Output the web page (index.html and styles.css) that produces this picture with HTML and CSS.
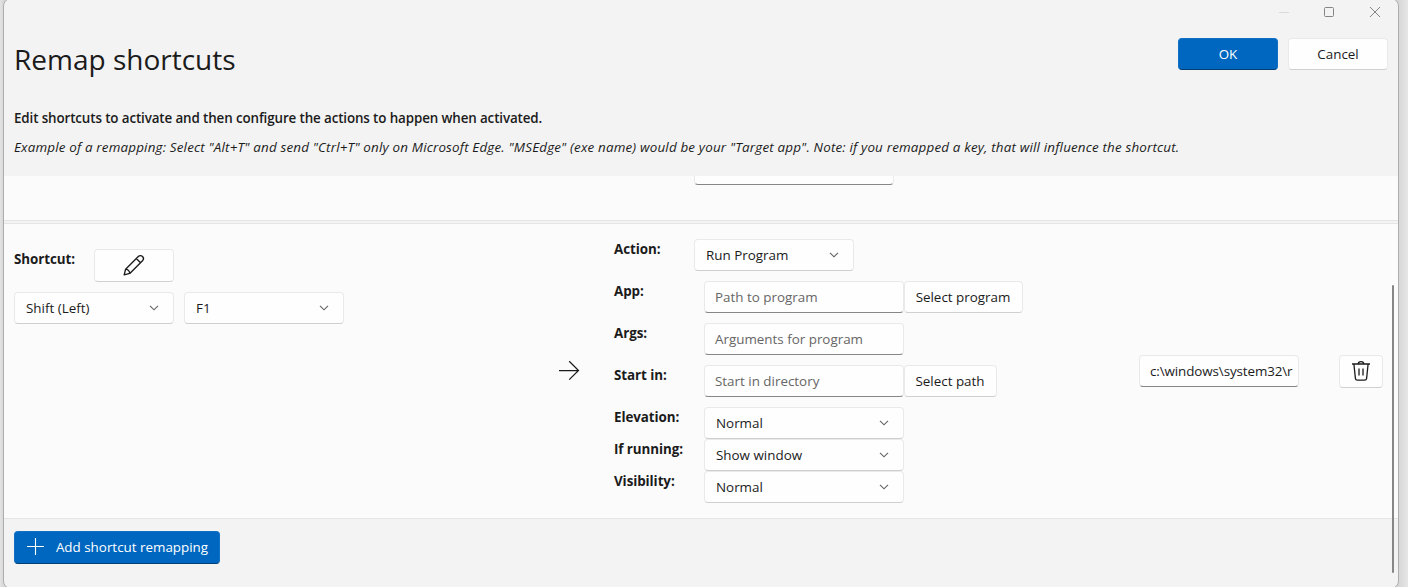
FILE: index.html
```html
<!DOCTYPE html>
<html lang="en">
<head>
<meta charset="utf-8">
<title>Remap shortcuts</title>
<link rel="stylesheet" href="styles.css">
</head>
<body>
<svg class="defs" width="0" height="0">
  <symbol id="chevron" viewBox="0 0 10 6"><path d="M1 .8 5 4.8 9 .8" fill="none" stroke="currentColor" stroke-width="1.15"/></symbol>
</svg>
<div class="window">
  <header class="header">
    <div class="caption">
      <svg class="cap-min" width="10" height="10" viewBox="0 0 10 10"><path d="M1 5.5H11" stroke="#dadada"/></svg>
      <svg class="cap-max" width="10" height="10" viewBox="0 0 10 10"><rect x=".5" y=".5" width="9" height="9" rx="1" fill="none" stroke="#858585"/></svg>
      <svg class="cap-close" width="10" height="10" viewBox="0 0 10 10"><path d="M0 0 10 10M10 0 0 10" fill="none" stroke="#858585"/></svg>
    </div>
    <div class="title-row">
      <h1 class="title">Remap shortcuts</h1>
      <button class="btn accent wide">OK</button>
      <button class="btn wide">Cancel</button>
    </div>
    <p class="lead">Edit shortcuts to activate and then configure the actions to happen when activated.</p>
    <p class="example">Example of a remapping: Select "Alt+T" and send "Ctrl+T" only on Microsoft Edge. "MSEdge" (exe name) would be your "Target app". Note: if you remapped a key, that will influence the shortcut.</p>
  </header>

  <main class="list">
    <section class="row previous"><div class="field clipped"></div></section>
    <section class="row current">
      <div class="keys">
        <div class="line">
          <label class="label">Shortcut:</label>
          <button class="btn edit" aria-label="Edit">
            <svg width="22" height="22" viewBox="0 0 22 22" fill="none" stroke="#1b1b1b" stroke-width="1.35" stroke-linejoin="round"><path d="M1.2 20.8 2.6 15.2 15.3 2.5a2.95 2.95 0 0 1 4.2 4.2L6.8 19.4ZM13.3 4.5 17.5 8.7M2.6 15.2C4.8 15.5 6.5 17.2 6.8 19.4"/></svg>
          </button>
        </div>
        <div class="combos">
          <div class="combo key"><span>Shift (Left)</span><svg class="chev"><use href="#chevron"/></svg></div>
          <div class="combo key"><span>F1</span><svg class="chev"><use href="#chevron"/></svg></div>
        </div>
      </div>
      <svg class="arrow" width="22" height="20" viewBox="0 0 22 20" fill="none" stroke="#1b1b1b" stroke-width="1.25"><path d="M1 10.5H20.5M11.2 1.2 20.5 10.5 11.2 19.6"/></svg>
      <div class="actions">
        <div class="line gap action"><label class="label">Action:</label><div class="combo key"><span>Run Program</span><svg class="chev"><use href="#chevron"/></svg></div></div>
        <div class="line gap"><label class="label">App:</label><div class="field hint">Path to program</div><button class="btn pick-program">Select program</button></div>
        <div class="line gap"><label class="label">Args:</label><div class="field hint">Arguments for program</div></div>
        <div class="line gap"><label class="label">Start in:</label><div class="field hint">Start in directory</div><button class="btn pick-path">Select path</button></div>
        <div class="line"><label class="label">Elevation:</label><div class="combo"><span>Normal</span><svg class="chev"><use href="#chevron"/></svg></div></div>
        <div class="line"><label class="label">If running:</label><div class="combo"><span>Show window</span><svg class="chev"><use href="#chevron"/></svg></div></div>
        <div class="line"><label class="label">Visibility:</label><div class="combo"><span>Normal</span><svg class="chev"><use href="#chevron"/></svg></div></div>
      </div>
      <div class="field target">c:\windows\system32\r</div>
      <button class="btn delete" aria-label="Delete">
        <svg width="20" height="22" viewBox="0 0 20 22" fill="none" stroke="#1b1b1b" stroke-width="1.3"><path d="M1 4H19M7.2 4a2.8 2.4 0 0 1 5.6 0M2.9 4 4.4 18.4a2 2 0 0 0 2 1.8H13.6a2 2 0 0 0 2-1.8L17.1 4M8 8.5V15.5M12 8.5V15.5"/></svg>
      </button>
    </section>
  </main>

  <footer class="footer">
    <button class="btn accent add">
      <svg width="17" height="17" viewBox="0 0 17 17"><path d="M8.5 0V17M0 8.5H17" stroke="#fff" stroke-width="1.1"/></svg>
      <span>Add shortcut remapping</span>
    </button>
  </footer>
  <div class="scrollbar"></div>
</div>
</body>
</html>
```
FILE: styles.css
```css
* { box-sizing: border-box; }
body {
  margin: 0;
  height: 587px;
  overflow: hidden;
  background: linear-gradient(90deg, #e3e3e3 0, #d6d6d6 4px, #d6d6d6 1398px, #e6e6e6 1408px);
  font: 13.4px/20px "Open Sans", "Noto Sans", sans-serif;
  color: #1b1b1b;
}
.defs { position: absolute; }
.window {
  position: relative;
  display: flex;
  flex-direction: column;
  margin: -2px 9px 0 3px;
  height: 591px;
  border: 1px solid #adadad;
  border-radius: 8px;
  background: #f3f3f3;
  overflow: hidden;
}
.header { flex: none; height: 177px; padding: 8px 10px 0; }
.caption { display: flex; justify-content: flex-end; gap: 36px; height: 10px; padding-right: 8px; }
.caption svg { display: block; overflow: visible; }
.title-row { display: flex; align-items: flex-start; gap: 10px; margin-top: 21px; height: 60px; }
.title { flex: 1; margin: 1px 0 0; font-size: 28px; font-weight: 400; line-height: 40px; }
.lead, .example { margin: 0; white-space: nowrap; }
.lead { padding-top: 10px; font-weight: 600; letter-spacing: -0.125px; }
.example { margin-top: 9px; font-style: italic; letter-spacing: 0.175px; }
.btn {
  display: flex;
  flex: none;
  align-items: center;
  justify-content: center;
  height: 32px;
  padding: 0;
  border: 1px solid #e9e9e9;
  border-bottom-color: #d0d0d0;
  border-radius: 4px;
  background: #fefefe;
  font: inherit;
  color: inherit;
  white-space: nowrap;
}
.btn.wide { width: 100px; }
.btn.accent { background: #0067c0; border-color: #1070c4; border-bottom-color: #003e73; color: #fff; }
.list { flex: none; height: 343px; overflow: hidden; }
.row { background: #fbfbfb; border-bottom: 1px solid #e5e5e5; }
.previous { height: 45px; padding-left: 690px; margin-bottom: 2px; overflow: hidden; }
.current {
  display: grid;
  grid-template-columns: 544px 56px 525px 200px 44px;
  height: 296px;
  padding: 15px 10px;
  border-top: 1px solid #e5e5e5;
}
.keys { padding-top: 10px; }
.line { display: flex; height: 32px; }
.line.gap { margin-bottom: 10px; }
.label { flex: none; width: 90px; font-weight: 700; letter-spacing: -0.08px; }
.action .label, .keys .label { width: 80px; }
.edit { width: 80px; height: 33px; padding-bottom: 2px; }
.combos { display: flex; gap: 10px; margin-top: 11px; }
.combo, .field {
  flex: none;
  width: 200px;
  height: 32px;
  border: 1px solid #e9e9e9;
  border-radius: 4px;
  background: #fefefe;
  line-height: 31px;
  white-space: nowrap;
}
.combo { display: flex; align-items: center; justify-content: space-between; padding: 0 14px 0 11px; border-bottom-color: #cfcfcf; }
.combo.key { width: 160px; }
.chev { width: 10px; height: 6px; color: #666; }
.field { padding-left: 10px; border-bottom-color: #868686; overflow: hidden; }
.hint { color: #666; }
.clipped { margin-top: -23px; }
.pick-program { width: 119px; padding-right: 1px; }
.pick-path { width: 93px; padding-right: 1px; }
.arrow { margin-top: 121px; }
.target { width: 160px; margin-top: 116px; letter-spacing: -0.1px; }
.delete { width: 44px; height: 33px; margin-top: 116px; padding-bottom: 1px; }
.footer { padding: 12px 10px; }
.add { width: 206px; height: 33px; gap: 12px; padding: 0 0 2px 1px; }
.scrollbar { position: absolute; right: 4px; top: 286px; width: 2px; height: 288px; border-radius: 1px; background: #868686; }
```
